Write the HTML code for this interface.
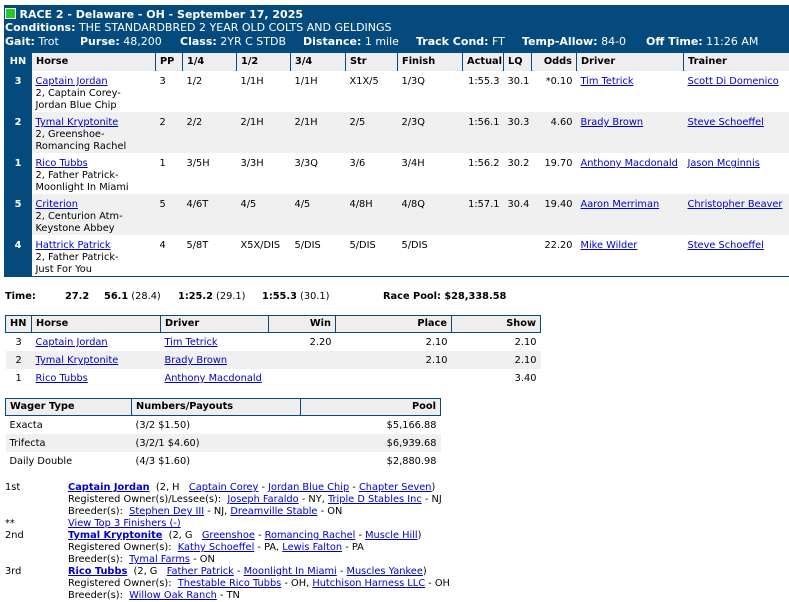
<!DOCTYPE html>
<html><head><meta charset="utf-8"><style>
body{margin:0;background:#fff;font-family:"DejaVu Sans","Liberation Sans",sans-serif;font-size:9.8px;color:#000;width:789px;height:598px;overflow:hidden;position:relative}
a{color:#00c;text-decoration:underline}
.hdr{position:absolute;left:4px;top:5px;width:785px;height:272px;background:#054a7c}
.ht{position:absolute;left:5px;color:#fff;font-size:11px;white-space:nowrap}
.ht b{font-weight:bold}
table{border-collapse:collapse;table-layout:fixed;position:absolute}
td,th{padding:0 0 0 4px;white-space:nowrap;overflow:hidden;text-align:left;vertical-align:top}
#m{left:4px;top:53px;width:785px}
#m th{background:#eee;height:18px;line-height:18px;border-left:1px solid #054a7c;font-weight:bold}
#m td{height:41px;line-height:12px;padding-top:5px;box-sizing:border-box;background:#fff}
#m td.hn{background:#054a7c;color:#fff;font-weight:bold;text-align:center;padding-left:0}
#m th.hn{background:#054a7c;color:#fff;text-align:center;padding-left:0}
#m tr.g td{background:#f0f0f0}
#m tr.g td.hn{background:#054a7c}
.r{text-align:right!important;padding-right:4px}
.t2 th{background:#eee;border:1px solid #054a7c;height:16px;line-height:16px;font-weight:bold}
.t2 td{height:16px;line-height:16px;padding-top:2px}
.t2 tr.g td{background:#f0f0f0}
.ln{position:absolute;left:5px;white-space:nowrap;line-height:12px}
.ln span{position:absolute;left:63px}
</style></head><body>
<div class="hdr"></div>
<div class="ht" style="top:8px"><span style="display:inline-block;width:9px;height:9px;background:#2c2;border:1px solid #fff;vertical-align:-1px"></span> <b>RACE 2 - Delaware - OH - September 17, 2025</b></div>
<div class="ht" style="top:21px"><b>Conditions:</b> THE STANDARDBRED 2 YEAR OLD COLTS AND GELDINGS</div>
<div class="ht" style="top:35px"><b>Gait:</b> Trot</div>
<div class="ht" style="top:35px;left:80px"><b>Purse:</b> 48,200</div>
<div class="ht" style="top:35px;left:180px"><b>Class:</b> 2YR C STDB</div>
<div class="ht" style="top:35px;left:303px"><b>Distance:</b> 1 mile</div>
<div class="ht" style="top:35px;left:416px"><b>Track Cond:</b> FT</div>
<div class="ht" style="top:35px;left:522px"><b>Temp-Allow:</b> 84-0</div>
<div class="ht" style="top:35px;left:646px"><b>Off Time:</b> 11:26 AM</div>
<table id="m">
<colgroup><col style="width:27px"><col style="width:124px"><col style="width:27px"><col style="width:54px"><col style="width:54px"><col style="width:55px"><col style="width:52px"><col style="width:65px"><col style="width:41px"><col style="width:28px"><col style="width:45px"><col style="width:107px"><col style="width:106px"></colgroup>
<tr><th class="hn">HN</th><th>Horse</th><th>PP</th><th>1/4</th><th>1/2</th><th>3/4</th><th>Str</th><th>Finish</th><th>Actual</th><th>LQ</th><th class="r">Odds</th><th>Driver</th><th>Trainer</th></tr>
<tr><td class="hn">3</td><td><a>Captain Jordan</a><br>2, Captain Corey-<br>Jordan Blue Chip</td><td>3</td><td>1/2</td><td>1/1H</td><td>1/1H</td><td>X1X/5</td><td>1/3Q</td><td class="r">1:55.3</td><td>30.1</td><td class="r">*0.10</td><td><a>Tim Tetrick</a></td><td><a>Scott Di Domenico</a></td></tr>
<tr class="g"><td class="hn">2</td><td><a>Tymal Kryptonite</a><br>2, Greenshoe-<br>Romancing Rachel</td><td>2</td><td>2/2</td><td>2/1H</td><td>2/1H</td><td>2/5</td><td>2/3Q</td><td class="r">1:56.1</td><td>30.3</td><td class="r">4.60</td><td><a>Brady Brown</a></td><td><a>Steve Schoeffel</a></td></tr>
<tr><td class="hn">1</td><td><a>Rico Tubbs</a><br>2, Father Patrick-<br>Moonlight In Miami</td><td>1</td><td>3/5H</td><td>3/3H</td><td>3/3Q</td><td>3/6</td><td>3/4H</td><td class="r">1:56.2</td><td>30.2</td><td class="r">19.70</td><td><a>Anthony Macdonald</a></td><td><a>Jason Mcginnis</a></td></tr>
<tr class="g"><td class="hn">5</td><td><a>Criterion</a><br>2, Centurion Atm-<br>Keystone Abbey</td><td>5</td><td>4/6T</td><td>4/5</td><td>4/5</td><td>4/8H</td><td>4/8Q</td><td class="r">1:57.1</td><td>30.4</td><td class="r">19.40</td><td><a>Aaron Merriman</a></td><td><a>Christopher Beaver</a></td></tr>
<tr><td class="hn">4</td><td><a>Hattrick Patrick</a><br>2, Father Patrick-<br>Just For You</td><td>4</td><td>5/8T</td><td>X5X/DIS</td><td>5/DIS</td><td>5/DIS</td><td>5/DIS</td><td></td><td></td><td class="r">22.20</td><td><a>Mike Wilder</a></td><td><a>Steve Schoeffel</a></td></tr>
</table>
<div class="ln" style="top:291px;font-weight:bold">Time:</div>
<div class="ln" style="top:291px;left:65px"><b>27.2</b></div>
<div class="ln" style="top:291px;left:104px"><b>56.1</b> (28.4)</div>
<div class="ln" style="top:291px;left:178px"><b>1:25.2</b> (29.1)</div>
<div class="ln" style="top:291px;left:262px"><b>1:55.3</b> (30.1)</div>
<div class="ln" style="top:291px;left:383px"><b>Race Pool: $28,338.58</b></div>
<table class="t2" style="left:5px;top:315px;width:535px">
<colgroup><col style="width:26px"><col style="width:129px"><col style="width:108px"><col style="width:67px"><col style="width:116px"><col style="width:89px"></colgroup>
<tr><th>HN</th><th>Horse</th><th>Driver</th><th class="r">Win</th><th class="r">Place</th><th class="r">Show</th></tr>
<tr><td style="padding-left:10px">3</td><td><a>Captain Jordan</a></td><td><a>Tim Tetrick</a></td><td class="r">2.20</td><td class="r">2.10</td><td class="r">2.10</td></tr>
<tr class="g"><td style="padding-left:10px">2</td><td><a>Tymal Kryptonite</a></td><td><a>Brady Brown</a></td><td></td><td class="r">2.10</td><td class="r">2.10</td></tr>
<tr><td style="padding-left:10px">1</td><td><a>Rico Tubbs</a></td><td><a>Anthony Macdonald</a></td><td></td><td></td><td class="r">3.40</td></tr>
</table>
<table class="t2" style="left:5px;top:398px;width:435px">
<colgroup><col style="width:126px"><col style="width:169px"><col style="width:140px"></colgroup>
<tr><th>Wager Type</th><th>Numbers/Payouts</th><th class="r">Pool</th></tr>
<tr><td>Exacta</td><td>(3/2 $1.50)</td><td class="r">$5,166.88</td></tr>
<tr class="g"><td>Trifecta</td><td>(3/2/1 $4.60)</td><td class="r">$6,939.68</td></tr>
<tr><td>Daily Double</td><td>(4/3 $1.60)</td><td class="r">$2,880.98</td></tr>
</table>
<div class="ln" style="top:482px">1st<span><a><b>Captain Jordan</b></a> &nbsp;(2, H &nbsp; <a>Captain Corey</a> - <a>Jordan Blue Chip</a> - <a>Chapter Seven</a>)</span></div>
<div class="ln" style="top:494px"><span>Registered Owner(s)/Lessee(s): &nbsp;<a>Joseph Faraldo</a> - NY, <a>Triple D Stables Inc</a> - NJ</span></div>
<div class="ln" style="top:506px"><span>Breeder(s): &nbsp;<a>Stephen Dey III</a> - NJ, <a>Dreamville Stable</a> - ON</span></div>
<div class="ln" style="top:518px">**<span><a>View Top 3 Finishers (-)</a></span></div>
<div class="ln" style="top:530px">2nd<span><a><b>Tymal Kryptonite</b></a> &nbsp;(2, G &nbsp; <a>Greenshoe</a> - <a>Romancing Rachel</a> - <a>Muscle Hill</a>)</span></div>
<div class="ln" style="top:542px"><span>Registered Owner(s): &nbsp;<a>Kathy Schoeffel</a> - PA, <a>Lewis Falton</a> - PA</span></div>
<div class="ln" style="top:554px"><span>Breeder(s): &nbsp;<a>Tymal Farms</a> - ON</span></div>
<div class="ln" style="top:566px">3rd<span><a><b>Rico Tubbs</b></a> &nbsp;(2, G &nbsp; <a>Father Patrick</a> - <a>Moonlight In Miami</a> - <a>Muscles Yankee</a>)</span></div>
<div class="ln" style="top:578px"><span>Registered Owner(s): &nbsp;<a>Thestable Rico Tubbs</a> - OH, <a>Hutchison Harness LLC</a> - OH</span></div>
<div class="ln" style="top:590px"><span>Breeder(s): &nbsp;<a>Willow Oak Ranch</a> - TN</span></div>
</body></html>
